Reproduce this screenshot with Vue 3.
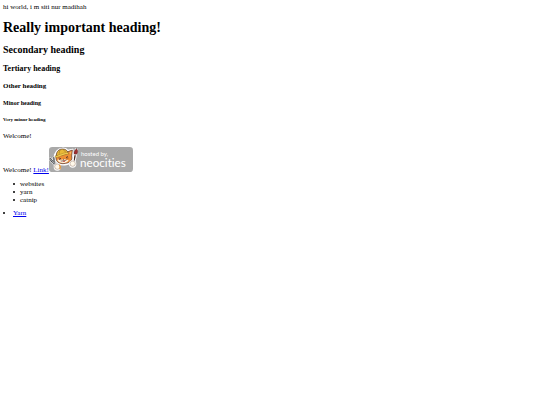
<script setup>
const items = ['websites', 'yarn', 'catnip'];
</script>

<template>
    <main>
        hi world, i m siti nur madihah
        <h1>Really important heading!</h1>
        <h2>Secondary heading</h2>
        <h3>Tertiary heading</h3>
        <h4>Other heading</h4>
        <h5>Minor heading</h5>
        <h6>Very minor heading</h6>

        <p>Welcome!</p>

        <div class="intro">
            <span>Welcome! <a href="#">Link!</a></span>
            <svg class="badge" viewBox="0 0 252 75" role="img" aria-label="hosted by neocities">
                <rect x="0" y="0" width="252" height="75" rx="10" fill="#a9a9a9" />

                <!-- wrench -->
                <g fill="none" stroke-linecap="round" stroke-linejoin="round">
                    <path d="M4 36l5 7 7-2-1-8M10 42l12 16" stroke="#fff" stroke-width="9" />
                    <path d="M4 36l5 7 7-2-1-8M10 42l12 16" stroke="#444" stroke-width="6" />
                    <path d="M4 36l5 7 7-2-1-8M10 42l12 16" stroke="#a5a9ad" stroke-width="3" />
                </g>

                <!-- brush -->
                <g stroke-linecap="round">
                    <path d="M82 9L73 51" stroke="#fff" stroke-width="10" />
                    <path d="M79 22L73 51" stroke="#4a2a25" stroke-width="4" />
                    <path d="M83 5c5 6 4 12 0 17h-8c-2-7 2-13 8-17z" fill="#9c2f32" stroke="#4a2a25" stroke-width="1" />
                    <path d="M76 23l6 1" stroke="#ddd" stroke-width="3" />
                </g>

                <!-- cat head -->
                <path d="M24 12C32 2 50 2 57 11L71 8l1 21c2 13-6 21-20 23-19 3-31-4-32-17l-3-11z" fill="#fff" stroke="#fff" stroke-width="5" stroke-linejoin="round" />
                <path d="M22 24l-1 12c3 12 15 16 29 13 14-2 21-10 18-22l2-18-16 6z" fill="#ee8f35" stroke="#4a2a25" stroke-width="2" stroke-linejoin="round" />
                <path d="M61 17l6-4-1 9z" fill="#f6b46c" />
                <path d="M25 39c7-3 12 1 18-2 7-2 10 2 16 2-2 5-6 8-13 9-10 1-18-2-21-9z" fill="#fff1dc" />
                <path d="M22 26c0-13 8-20 19-20 9 0 15 5 16 13L40 24z" fill="#e9b938" stroke="#4a2a25" stroke-width="2" stroke-linejoin="round" />
                <path d="M18 27c11-2 22-9 37-11l5 5c-14 1-26 8-40 11z" fill="#f4cf4c" stroke="#80551f" stroke-width="1" stroke-linejoin="round" />
                <path d="M34 9c-3 4-4 7-3 11M44 7c1 4 3 7 6 8" fill="none" stroke="#9e742a" stroke-width="2" />
                <path d="M30 33l6 2-5 3M56 28l-5 4 6 1M36 42c3 1 6 0 7-2 3 2 6 1 9-1" fill="none" stroke="#4a2a25" stroke-width="2" stroke-linecap="round" />
                <path d="M41 36l5-1-2 3z" fill="#4a2a25" />
                <path d="M41 42l7-1c0 5-5 6-7 1z" fill="#c34b3d" />

                <!-- paws -->
                <circle cx="25" cy="60" r="11" fill="#fff" />
                <circle cx="25" cy="59" r="8" fill="#fff8ea" stroke="#6b4638" stroke-width="1" />
                <path d="M31 53c4 4 4 9 1 14" fill="none" stroke="#e59a42" stroke-width="4" />
                <circle cx="71" cy="51" r="11" fill="#fff" />
                <circle cx="71" cy="50" r="8" fill="#fff8ea" stroke="#6b4638" stroke-width="1" />

                <text class="small" x="96" y="28">hosted by,</text>
                <text class="name" x="93" y="61">neocities</text>
            </svg>
        </div>

        <ul class="list">
            <li v-for="item in items" :key="item">{{ item }}</li>
        </ul>

        <ul class="links">
            <li><a href="#">Yarn</a></li>
        </ul>
    </main>
</template>

<style>
body {
    margin: 0;
    background: white;
}
</style>

<style scoped>
main {
    padding: 3px;
    font-family: "Liberation Serif", "Times New Roman", serif;
    font-size: 7px;
    line-height: 8px;
    color: black;
}

h1 {
    margin: 9px 0;
    font-size: 14px;
    line-height: 15px;
}

h2 {
    margin: 9px 0 8px;
    font-size: 10px;
    line-height: 12px;
}

h3 {
    margin: 8px 0;
    font-size: 8px;
    line-height: 10px;
}

h4 {
    margin: 8px 0 10px;
    font-size: 7px;
    line-height: 8px;
}

h5 {
    margin: 10px 0;
    font-size: 6px;
    line-height: 6px;
}

h6 {
    margin: 11px 0 10px;
    font-size: 5px;
    line-height: 5px;
}

p {
    margin: 7px 0;
}

a {
    color: #0000ee;
}

.intro {
    display: flex;
    align-items: last baseline;
}

.badge {
    width: 84px;
    height: 25px;
}

.badge text {
    fill: white;
    font-family: Lato, "Open Sans", sans-serif;
    font-variant-ligatures: none;
}

.badge .small {
    font-size: 18px;
}

.badge .name {
    font-size: 35px;
}

ul {
    margin: 6px 0 5px;
    padding: 0;
    list-style: none;
}

li {
    display: flex;
    align-items: center;
}

li::before {
    content: "";
    width: 2px;
    height: 2px;
    border-radius: 1px;
    background: black;
}

.list {
    padding-left: 10px;
}

.list li {
    gap: 5px;
}

.links {
    margin: 5px 0;
}

.links li {
    gap: 8px;
}
</style>
